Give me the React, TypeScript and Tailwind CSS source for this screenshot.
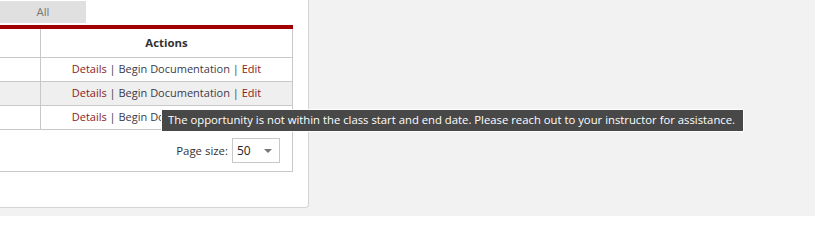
const rows = [
  { shaded: false },
  { shaded: true },
  { shaded: false },
];

const ActionLinks = () => (
  <span className="whitespace-nowrap text-[11px]">
    <a className="text-[#8b1c1c]">Details</a>
    <span className="text-[#3b3b4a]"> | Begin Documentation | </span>
    <a className="text-[#8b1c1c]">Edit</a>
  </span>
);

export default function App() {
  return (
    <div
      className="relative w-[815px] h-[216px] overflow-hidden bg-[#f2f2f2] text-[11.4px] text-[#333]"
      style={{ fontFamily: '"Open Sans", "Noto Sans", sans-serif' }}
    >
      <div className="w-[309px] h-[208px] bg-white border-r border-b border-[#d4d4d4] rounded-br-[4px] pt-[1px]">
        <div className="w-[86px] h-[22px] bg-[#e0e0e0] text-[#777] text-center leading-[22px]">All</div>

        <div className="mt-[2px] w-[293px] border-t-4 border-[#a00000]">
          <div className="border-r border-b border-[#c8c8c8]">
            <div className="grid grid-cols-[41px_1fr] h-[29px] border-b border-[#c8c8c8]">
              <div className="border-r border-[#c8c8c8]" />
              <div className="flex items-center justify-center font-bold">Actions</div>
            </div>
            {rows.map((row, i) => (
              <div
                key={i}
                className={`grid grid-cols-[41px_1fr] h-[24px] border-b border-[#c8c8c8] ${row.shaded ? 'bg-[#efefef]' : 'bg-white'}`}
              >
                <div className="border-r border-[#c8c8c8]" />
                <div className="flex items-center justify-center">
                  <ActionLinks />
                </div>
              </div>
            ))}
            <div className="flex items-center justify-end h-[41px] pr-[12px] gap-[4px]">
              <span className="text-[#333]">Page size:</span>
              <div className="flex items-center justify-between w-[48px] h-[25px] border border-[#c8c8c8] pl-[4px] pr-[7px]">
                <span className="text-[#222] text-[12px]">50</span>
                <svg width="8" height="4" viewBox="0 0 8 4">
                  <path d="M0 0 L8 0 L4 4 Z" fill="#777" />
                </svg>
              </div>
            </div>
          </div>
        </div>
      </div>

      <div className="absolute left-[161px] top-[109px] h-[23px] w-[583px] bg-[#484848] border border-white text-white text-[11.3px] flex items-center pl-[6px] whitespace-nowrap">
        The opportunity is not within the class start and end date. Please reach out to your instructor for assistance.
      </div>
    </div>
  );
}
